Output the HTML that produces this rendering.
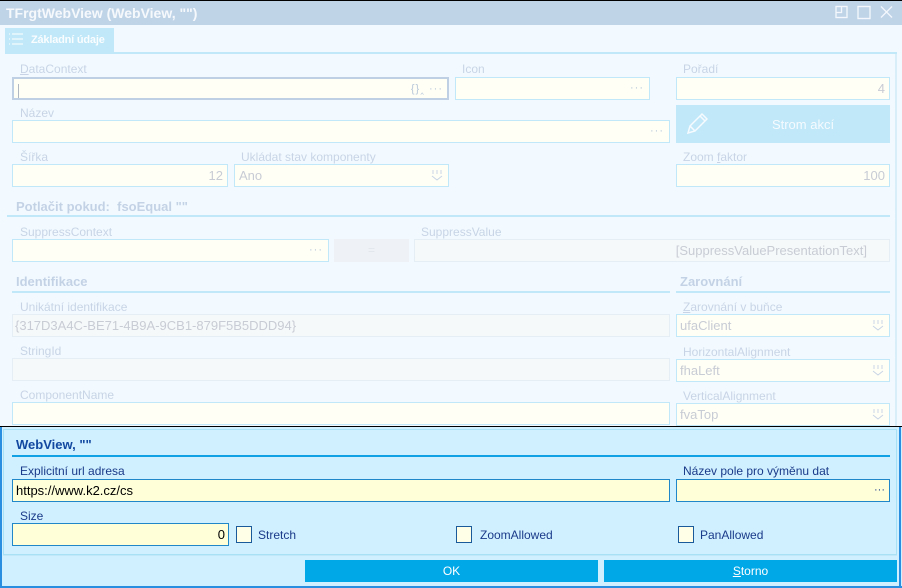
<!DOCTYPE html>
<html><head><meta charset="utf-8">
<style>
*{box-sizing:border-box;margin:0;padding:0}
body{width:902px;height:588px;position:relative;background:#f2faff;font-family:"Liberation Sans",sans-serif;font-size:12px;overflow:hidden}
.a{position:absolute}
.lbl{position:absolute;color:#c8d4e6;font-size:12px;white-space:nowrap}
.in{position:absolute;background:#fffff6;border:1px solid #c0e8f8;height:23px;color:#c8ccd4;font-size:13px;line-height:21px;padding:0 4px;white-space:nowrap;overflow:hidden}
.r{text-align:right}
.dots{position:absolute;right:5px;top:0;font-size:11px;letter-spacing:1px;color:#b8c8d8}
.h{position:absolute;font-weight:bold;color:#c4d2e6;font-size:13px}
.ln{position:absolute;height:2px;background:#c0e8f8}
.dd{position:absolute;right:5px;top:5px;width:12px;height:11px}
.bl{position:absolute;color:#1a3a8a;font-size:12px;white-space:nowrap}
.bin{position:absolute;background:#ffffd8;border:1px solid #2088c8;height:23px;font-size:13px;line-height:21px;padding:0 3px;color:#000}
.cb{position:absolute;width:16px;height:17px;border:1px solid #1a5a9a;background:#ffffe8}
.btn{position:absolute;background:#00a8e8;color:#fff;text-align:center;line-height:22px;height:22px;font-size:12px}
</style></head><body>
<div class="a" style="left:0;top:0;width:902px;height:1px;background:#000"></div>
<div class="a" style="left:0;top:1px;width:902px;height:24px;background:#c0d4e8"></div>
<div class="a" style="left:6px;top:5px;color:#f6f9fc;font-weight:bold;font-size:14px">TFrgtWebView (WebView, "")</div>
<svg class="a" style="left:834px;top:5px" width="60" height="15" viewBox="0 0 60 15" fill="none" stroke="#f4f8fc" stroke-width="1.3"><rect x="2" y="1.5" width="11" height="11"/><path d="M2 7.5h5.5V1.5"/><rect x="24" y="1.5" width="12" height="12"/><path d="M47 1.5l11 11M58 1.5l-11 11"/></svg>

<div class="a" style="left:5px;top:28px;width:109px;height:25px;background:#c0e8f8"></div>
<svg class="a" style="left:8px;top:32px" width="16" height="14" stroke="#f4fbff" stroke-width="1.3"><path d="M1 2h1M4 2h11M1 7h1M4 7h11M1 12h1M4 12h11"/></svg>
<div class="a" style="left:31px;top:34px;color:#fafdff;font-weight:bold;font-size:11px;letter-spacing:-0.2px">Základní údaje</div>
<div class="ln" style="left:5px;top:52px;width:892px;height:2px"></div>
<div class="a" style="left:895px;top:54px;width:2px;height:372px;background:#d8eef8"></div>

<div class="lbl" style="left:20px;top:62px"><u>D</u>ataContext</div>
<div class="in" style="left:12px;top:77px;width:437px;border:2px solid #c0d0e4"><span style="border-left:1px solid #b0b8c4;height:14px;display:inline-block;vertical-align:middle"></span><span class="dots" style="right:4px">{}‸ ···</span></div>
<div class="lbl" style="left:462px;top:62px">Icon</div>
<div class="in" style="left:455px;top:77px;width:195px"><span class="dots">···</span></div>
<div class="lbl" style="left:683px;top:62px">Pořadí</div>
<div class="in r" style="left:676px;top:77px;width:214px">4</div>

<div class="lbl" style="left:20px;top:106px">Název</div>
<div class="in" style="left:12px;top:120px;width:658px"><span class="dots">···</span></div>
<div class="a" style="left:676px;top:105px;width:214px;height:38px;background:#c0e8f8"></div>
<svg class="a" style="left:684px;top:112px" width="26" height="24" fill="none" stroke="#f6fbff" stroke-width="1.5"><path d="M4 21l2-7L18 2l5 5L11 19zM6 14l5 5M16 4l5 5"/></svg>
<div class="a" style="left:676px;top:117px;width:254px;text-align:center;color:#f6fbff;font-size:13px">Strom akcí</div>

<div class="lbl" style="left:20px;top:150px">Šířka</div>
<div class="in r" style="left:12px;top:164px;width:216px">12</div>
<div class="lbl" style="left:241px;top:150px">Ukládat stav komponenty</div>
<div class="in" style="left:234px;top:164px;width:215px">Ano<svg class="dd" viewBox="0 0 12 11" fill="none" stroke="#c8d4e4"><path d="M1 1h2M5 1h2M9 1h2M1 3h2M5 3h2M9 3h2M1 6l5 4 5-4"/></svg></div>
<div class="lbl" style="left:683px;top:150px">Zoom <u>f</u>aktor</div>
<div class="in r" style="left:676px;top:164px;width:214px">100</div>

<div class="h" style="left:16px;top:199px">Potlačit pokud:&nbsp; fsoEqual ""</div>
<div class="ln" style="left:7px;top:215px;width:883px"></div>
<div class="lbl" style="left:20px;top:225px">SuppressContext</div>
<div class="in" style="left:12px;top:239px;width:317px"><span class="dots">···</span></div>
<div class="a" style="left:334px;top:239px;width:75px;height:23px;background:#eef2f6"><div style="text-align:center;color:#e0e6ec;line-height:22px">=</div></div>
<div class="lbl" style="left:421px;top:225px">SuppressValue</div>
<div class="in r" style="left:414px;top:239px;width:476px;background:#f6f9fa;border-color:#e4eef4;padding-right:22px">[SuppressValuePresentationText]</div>

<div class="h" style="left:16px;top:274px">Identifikace</div>
<div class="ln" style="left:12px;top:291px;width:658px"></div>
<div class="h" style="left:680px;top:274px">Zarovnání</div>
<div class="ln" style="left:676px;top:291px;width:214px"></div>

<div class="lbl" style="left:20px;top:300px">Unikátní identifikace</div>
<div class="in" style="left:12px;top:314px;width:658px;background:#f6f9fa;border-color:#e4eef4;padding-left:2px">{317D3A4C-BE71-4B9A-9CB1-879F5B5DDD94}</div>
<div class="lbl" style="left:683px;top:300px"><u>Z</u>arovnání v buňce</div>
<div class="in" style="left:676px;top:314px;width:214px;padding-left:3px">ufaClient<svg class="dd" viewBox="0 0 12 11" fill="none" stroke="#c8d4e4"><path d="M1 1h2M5 1h2M9 1h2M1 3h2M5 3h2M9 3h2M1 6l5 4 5-4"/></svg></div>

<div class="lbl" style="left:20px;top:344px">StringId</div>
<div class="in" style="left:12px;top:358px;width:658px;background:#f6f9fa;border-color:#e4eef4"></div>
<div class="lbl" style="left:683px;top:345px">HorizontalAlignment</div>
<div class="in" style="left:676px;top:359px;width:214px;padding-left:3px">fhaLeft<svg class="dd" viewBox="0 0 12 11" fill="none" stroke="#c8d4e4"><path d="M1 1h2M5 1h2M9 1h2M1 3h2M5 3h2M9 3h2M1 6l5 4 5-4"/></svg></div>

<div class="lbl" style="left:20px;top:388px">ComponentName</div>
<div class="in" style="left:12px;top:402px;width:658px"></div>
<div class="lbl" style="left:683px;top:389px">VerticalAlignment</div>
<div class="in" style="left:676px;top:403px;width:214px;padding-left:3px">fvaTop<svg class="dd" viewBox="0 0 12 11" fill="none" stroke="#c8d4e4"><path d="M1 1h2M5 1h2M9 1h2M1 3h2M5 3h2M9 3h2M1 6l5 4 5-4"/></svg></div>

<div class="a" style="left:0;top:427px;width:902px;height:161px;background:#d0f0ff"></div>
<div class="a" style="left:0;top:426px;width:902px;height:1px;background:#000"></div>
<div class="a" style="left:0;top:427px;width:2px;height:161px;background:#2a8ee0"></div>
<div class="a" style="left:899px;top:427px;width:2px;height:161px;background:#2a8ee0"></div>
<div class="a" style="left:0;top:586px;width:902px;height:2px;background:#2a8ee0"></div>
<div class="a" style="left:3px;top:429px;width:894px;height:126px;border:1px solid #a8e0f6"></div>
<div class="a" style="left:3px;top:555px;width:894px;height:1px;background:#c0e8f8"></div>

<div class="a" style="left:16px;top:437px;font-weight:bold;color:#1248a0;font-size:13px">WebView, ""</div>
<div class="a" style="left:12px;top:455px;width:878px;height:2px;background:#10a0e4"></div>
<div class="bl" style="left:20px;top:464px">Explicitní url adresa</div>
<div class="bin" style="left:12px;top:479px;width:658px">https://www.k2.cz/cs</div>
<div class="bl" style="left:683px;top:464px">Název pole pro výměnu dat</div>
<div class="bin" style="left:676px;top:479px;width:214px"><span style="position:absolute;right:4px;top:0;color:#1a3a8a;font-size:11px">···</span></div>
<div class="bl" style="left:20px;top:509px">Size</div>
<div class="bin r" style="left:12px;top:523px;width:217px">0</div>
<div class="cb" style="left:236px;top:526px"></div>
<div class="bl" style="left:258px;top:528px">Stretch</div>
<div class="cb" style="left:456px;top:526px"></div>
<div class="bl" style="left:480px;top:528px">ZoomAllowed</div>
<div class="cb" style="left:678px;top:526px"></div>
<div class="bl" style="left:700px;top:528px">PanAllowed</div>

<div class="btn" style="left:305px;top:560px;width:293px">OK</div>
<div class="btn" style="left:604px;top:560px;width:293px"><u>S</u>torno</div>
</body></html>
